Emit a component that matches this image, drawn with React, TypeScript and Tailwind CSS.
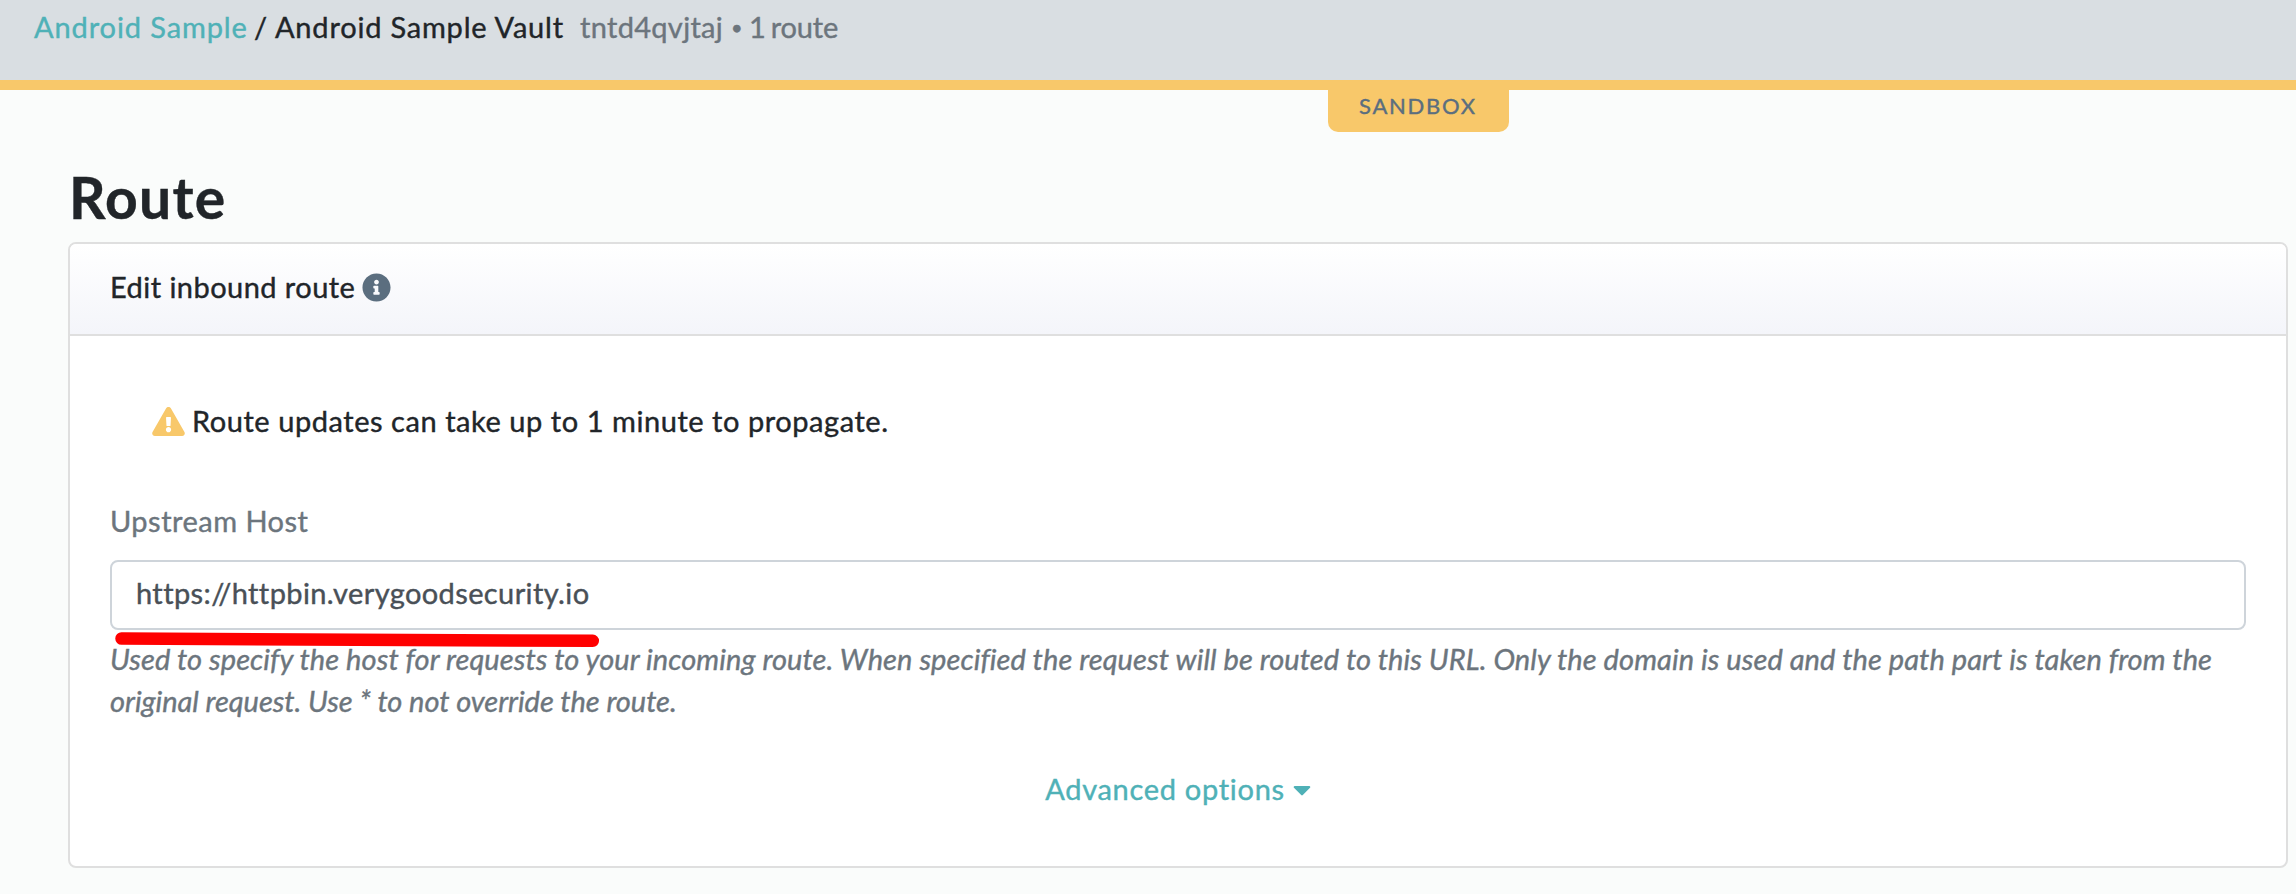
import { FaCaretDown, FaExclamationTriangle, FaInfoCircle } from "react-icons/fa";

function Breadcrumb() {
  return (
    <header className="flex h-[80px] items-start bg-[#d9dee2] pt-[6px] pl-[34px] whitespace-nowrap">
      <a className="w-[220px] tracking-[0.9px] text-[#4fb1b7]">Android Sample</a>
      <span className="w-[21px]">/</span>
      <span className="w-[305px] tracking-[0.8px]">Android Sample Vault</span>
      <span className="flex text-[#6c757d]">
        <span className="w-[151px] tracking-[0.3px]">tntd4qvjtaj</span>
        <span className="w-[18px] text-[20px]">•</span>
        <span className="tracking-[-0.2px] [word-spacing:-2px]">1 route</span>
      </span>
    </header>
  );
}

function EnvironmentBadge() {
  return (
    <div className="h-[52px] border-t-[10px] border-[#f8c86a] pl-[1328px]">
      <div className="h-[42px] w-[181px] rounded-b-[10px] bg-[#f8c86a] pl-[31px] text-[22px] leading-[31px] tracking-[1.75px] text-[#5b6e7f]">
        SANDBOX
      </div>
    </div>
  );
}

function RouteCard() {
  return (
    <section className="h-[626px] w-[2220px] overflow-hidden rounded-[8px] border-2 border-[#dfdfdf] bg-white">
      <div className="flex h-[92px] items-start border-b-2 border-[#dfdfdf] bg-linear-to-b from-white to-[#f4f5fa] pt-[22px] pl-[40px]">
        <span className="w-[252px] tracking-[0.45px] whitespace-nowrap">Edit inbound route</span>
        <FaInfoCircle className="mt-[7px] size-[29px] text-[#5b6e7f]" />
      </div>
      <div className="flex flex-col px-[40px] pt-[64px]">
        <div className="flex pl-[42px]">
          <FaExclamationTriangle className="mt-[7px] h-[29px] w-[33px] text-[#f8c86a]" />
          <span className="ml-[7px] tracking-[0.55px] whitespace-nowrap">
            Route updates can take up to 1 minute to propagate.
          </span>
        </div>
        <label className="mt-[58px] tracking-[0.48px] text-[#6c757d]">Upstream Host</label>
        <div className="relative mt-[18px] h-[70px] rounded-[8px] border-2 border-[#ced4da] pt-[10px] pl-[24px] tracking-[0.39px] text-[#495057]">
          https://httpbin.verygoodsecurity.io
          <svg className="absolute top-[68px] left-[2px]" width="490" height="20" viewBox="0 0 490 20">
            <path d="M7.500 8.500L478.800 10.800" stroke="#ff0000" strokeWidth="12.500" strokeLinecap="round" />
          </svg>
        </div>
        <p className="mt-[8px] whitespace-nowrap text-[#6c757d] italic">
          <span className="tracking-[0.085px]">
            Used to specify the host for requests to your incoming route. When specified the request will be routed to
            this URL. Only the domain is used and the path part is taken from the
          </span>
          <br />
          <span className="tracking-[-0.03px]">original request. Use * to not override the route.</span>
        </p>
        <div className="mt-[46px] flex justify-center text-[#4fb1b7]">
          <span className="tracking-[0.7px]">Advanced options</span>
          <FaCaretDown className="mt-[7px] ml-[8px] h-[29px] w-[18px]" />
        </div>
      </div>
    </section>
  );
}

export default function App() {
  return (
    <div className="h-[894px] w-[2296px] overflow-hidden bg-[#fafcfb] font-['Lato',sans-serif] text-[29px] leading-[42px] text-[#212529] [-webkit-text-stroke:0.4px]">
      <Breadcrumb />
      <EnvironmentBadge />
      <main className="pt-[31px] pl-[68px]">
        <h1 className="mb-[11px] pl-px text-[57px] leading-[68px] font-bold tracking-[1.3px]">Route</h1>
        <RouteCard />
      </main>
    </div>
  );
}
